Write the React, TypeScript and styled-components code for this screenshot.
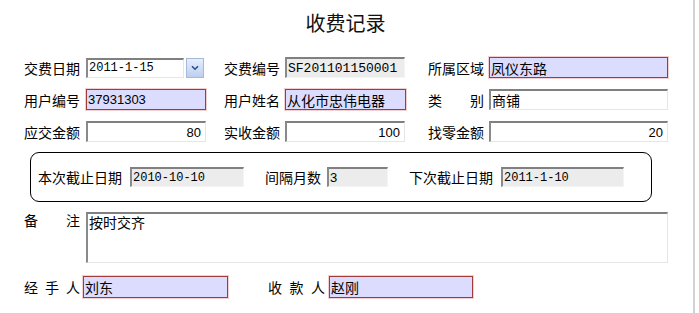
import React from "react";
import styled, { createGlobalStyle, css } from "styled-components";

const GlobalStyle = createGlobalStyle`
  html, body {
    margin: 0;
    padding: 0;
    background: #fff;
    overflow: hidden;
  }
  body {
    font-family: "Noto Sans CJK SC", "Liberation Sans", sans-serif;
    color: #000;
  }
`;

const Page = styled.div`
  width: 695px;
  height: 313px;
  border-right: 2px solid #d2d2d2;
  box-sizing: border-box;
`;

const Title = styled.h1`
  margin: 0;
  height: 46px;
  line-height: 46px;
  text-align: center;
  font-size: 20px;
  font-weight: normal;
  color: #111;
  padding-right: 2px;
`;

const Form = styled.div`
  padding-left: 24px;
  padding-top: 11px;
`;

const Grid = styled.div`
  display: grid;
  grid-template-columns: 200px 204px 240px;
  grid-auto-rows: 21px;
  row-gap: 11px;
`;

const Field = styled.div<{ $gap?: number }>`
  display: flex;
  align-items: center;
  gap: ${({ $gap }) => $gap ?? 5}px;
`;

const Label = styled.span<{ $w?: number }>`
  display: inline-block;
  width: ${({ $w }) => $w ?? 56}px;
  font-size: 14px;
  line-height: 16px;
  white-space: nowrap;
  text-align: justify;
  text-align-last: justify;
  flex: none;
`;

const FreeLabel = styled.span`
  font-size: 14px;
  line-height: 16px;
  white-space: nowrap;
  flex: none;
`;

type Kind = "plain" | "gray" | "mark";

const kinds = {
  plain: css`
    background: #fff;
    border-style: solid;
    border-width: 2px 1px 1px 2px;
    border-color: #808080 #e6e6e6 #e6e6e6 #8a8a8a;
  `,
  gray: css`
    background: #ececec;
    border-style: solid;
    border-width: 2px 1px 1px 2px;
    border-color: #808080 #f4f4f4 #f4f4f4 #8a8a8a;
  `,
  mark: css`
    background: #dcdcff;
    border: 1px solid #a23a3a;
    box-shadow: 0 0 0 1px #f3cfcf;
  `,
};

const Box = styled.div<{ $kind: Kind; $w: number; $h?: number; $right?: boolean; $mono?: number; $cjk?: boolean }>`
  ${({ $kind }) => kinds[$kind]}
  width: ${({ $w }) => $w}px;
  height: ${({ $h }) => $h ?? 21}px;
  box-sizing: border-box;
  flex: none;
  display: flex;
  align-items: center;
  justify-content: ${({ $right }) => ($right ? "flex-end" : "flex-start")};
  padding: 0 ${({ $right }) => ($right ? 4 : 1)}px 0 1px;
  white-space: nowrap;
  overflow: hidden;
  font-family: ${({ $mono, $cjk }) =>
    $mono
      ? `"Liberation Mono", "Noto Sans CJK SC", monospace`
      : $cjk
      ? `"Noto Sans CJK SC", sans-serif`
      : `"Liberation Sans", "Noto Sans CJK SC", sans-serif`};
  font-size: ${({ $mono, $cjk }) => ($mono ? $mono : $cjk ? 14 : 13)}px;
  color: #000;
`;

const DropButton = styled.div`
  width: 18px;
  height: 20px;
  box-sizing: border-box;
  border: 1px solid #a6b9d8;
  background: linear-gradient(#e6eefb, #bccff0);
  display: flex;
  align-items: center;
  justify-content: center;
  flex: none;
`;

const Panel = styled.div`
  margin: 10px 0 0 6px;
  width: 622px;
  height: 50px;
  box-sizing: border-box;
  border: 1px solid #000;
  border-radius: 9px;
  display: flex;
  align-items: center;
  padding-left: 7px;
  gap: 21px;
`;

const NoteRow = styled.div`
  margin-top: 10px;
  display: flex;
  align-items: flex-start;
  gap: 6px;
`;

const NoteLabel = styled(Label)`
  line-height: 14px;
  margin-top: 1px;
`;

const NoteArea = styled(Box)`
  align-items: flex-start;
  padding-top: 1px;
  line-height: 14px;
`;

const BottomRow = styled.div`
  margin-top: 13px;
  display: flex;
  align-items: center;
  gap: 40px;
`;

export default function App() {
  return (
    <>
      <GlobalStyle />
      <Page>
        <Title>收费记录</Title>
        <Form>
          <Grid>
            <Field $gap={6}>
              <Label>交费日期</Label>
              <Field $gap={2}>
                <Box $kind="plain" $w={98} $h={20} $mono={12}>2011-1-15</Box>
                <DropButton>
                  <svg width="8" height="6" viewBox="0 0 8 6">
                    <path d="M1 1.2 L4 4.2 L7 1.2" stroke="#2a4f8e" strokeWidth="1.6" fill="none" />
                  </svg>
                </DropButton>
              </Field>
            </Field>
            <Field>
              <Label>交费编号</Label>
              <Box $kind="gray" $w={120} $mono={13}>SF201101150001</Box>
            </Field>
            <Field>
              <Label>所属区域</Label>
              <Box $kind="mark" $w={179} $cjk>凤仪东路</Box>
            </Field>

            <Field $gap={6}>
              <Label>用户编号</Label>
              <Box $kind="mark" $w={120}>37931303</Box>
            </Field>
            <Field>
              <Label>用户姓名</Label>
              <Box $kind="mark" $w={121} $cjk>从化市忠伟电器</Box>
            </Field>
            <Field>
              <Label>类别</Label>
              <Box $kind="plain" $w={179} $cjk>商铺</Box>
            </Field>

            <Field $gap={6}>
              <Label>应交金额</Label>
              <Box $kind="plain" $w={120} $right>80</Box>
            </Field>
            <Field>
              <Label>实收金额</Label>
              <Box $kind="plain" $w={120} $right>100</Box>
            </Field>
            <Field>
              <Label>找零金额</Label>
              <Box $kind="plain" $w={179} $right>20</Box>
            </Field>
          </Grid>

          <Panel>
            <Field $gap={8}>
              <FreeLabel>本次截止日期</FreeLabel>
              <Box $kind="gray" $w={114} $h={20} $mono={12}>2010-10-10</Box>
            </Field>
            <Field $gap={6}>
              <FreeLabel>间隔月数</FreeLabel>
              <Box $kind="gray" $w={61} $h={20}>3</Box>
            </Field>
            <Field $gap={8}>
              <FreeLabel>下次截止日期</FreeLabel>
              <Box $kind="gray" $w={123} $h={20} $mono={12}>2011-1-10</Box>
            </Field>
          </Panel>

          <NoteRow>
            <NoteLabel>备注</NoteLabel>
            <NoteArea $kind="plain" $w={582} $h={51} $cjk>按时交齐</NoteArea>
          </NoteRow>

          <BottomRow>
            <Field $gap={3}>
              <Label>经手人</Label>
              <Box $kind="mark" $w={145} $h={22} $cjk>刘东</Box>
            </Field>
            <Field $gap={4}>
              <Label $w={57}>收款人</Label>
              <Box $kind="mark" $w={144} $h={22} $cjk>赵刚</Box>
            </Field>
          </BottomRow>
        </Form>
      </Page>
    </>
  );
}
